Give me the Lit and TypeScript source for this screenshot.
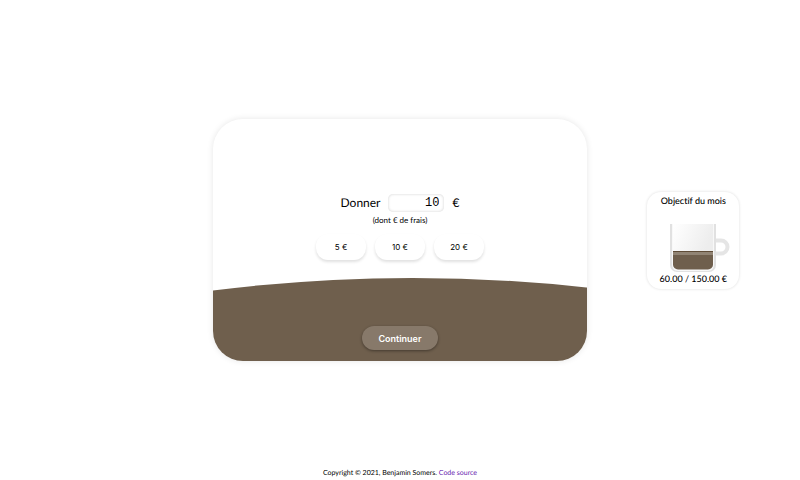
import { LitElement, html, css } from "lit";
import { customElement, property, state } from "lit/decorators.js";

@customElement("goal-mug")
class GoalMug extends LitElement {
  @property({ type: Number }) value = 0;
  @property({ type: Number }) goal = 1;

  static styles = css`
    :host {
      display: block;
    }
    .card {
      display: flex;
      flex-direction: column;
      align-items: center;
      box-sizing: border-box;
      min-width: 92px;
      padding: 3px 9px 4px;
      border-radius: 14px;
      background: #fff;
      box-shadow: 0 0 3px rgba(0, 0, 0, 0.14);
    }
    .title,
    .amount {
      margin: 0;
      font-size: 9px;
      line-height: 12px;
      font-weight: 500;
      font-variant-ligatures: none;
      white-space: nowrap;
    }
    .mug {
      display: block;
      width: 66px;
      height: 50px;
      margin: 16px 0 0;
      align-self: flex-end;
    }
  `;

  render() {
    const level = 44 - (this.value / this.goal) * 40;
    return html`
      <section class="card">
        <h2 class="title">Objectif du mois</h2>
        <svg class="mug" viewBox="-5 0 66 50" aria-hidden="true">
          <defs>
            <linearGradient id="glass" x1="0" y1="0" x2="1" y2="0.3">
              <stop offset="0" stop-color="#ffffff" />
              <stop offset="1" stop-color="#ededed" />
            </linearGradient>
          </defs>
          <path d="M46 17.500h6a6.500 6.500 0 0 1 0 13H46" fill="none" stroke="#e5e5e5" stroke-width="4" />
          <path d="M1 1h46v41a7 7 0 0 1-7 7H8a7 7 0 0 1-7-7z" fill="#e1e1e1" />
          <path d="M3 1h42v41a6 6 0 0 1-6 6H9a6 6 0 0 1-6-6z" fill="#f8f8f8" />
          <path d="M4 1h40v28H4z" fill="url(#glass)" />
          <path d="M4 ${level}h40V41.500a5 5 0 0 1-5 5H9a5 5 0 0 1-5-5z" fill="#6f5f4d" />
          <path d="M4 ${level}h40v4H4z" fill="#918474" />
          <path d="M4 ${level}h40v1H4z" fill="#5f4c37" />
        </svg>
        <p class="amount">${this.value.toFixed(2)} / ${this.goal.toFixed(2)} €</p>
      </section>
    `;
  }
}

@customElement("app-root")
class AppRoot extends LitElement {
  @state() private amount = 10;

  private presets = [5, 10, 20];

  static styles = css`
    :host {
      display: grid;
      grid-template-columns: 4fr 7fr 4fr;
      grid-template-rows: 1fr auto 1fr;
      min-height: 100vh;
      background: #fff;
      color: #000;
      font-family: Lato, sans-serif;
      text-rendering: geometricPrecision;
    }
    .donation {
      grid-column: 2;
      grid-row: 2;
      display: flex;
      flex-direction: column;
      overflow: hidden;
      border-radius: 30px;
      background: #fff;
      box-shadow: 0 0 6px rgba(0, 0, 0, 0.1);
    }
    .choice {
      display: flex;
      flex-direction: column;
      align-items: center;
      padding: 75px 16px 18px;
    }
    .line {
      display: flex;
      align-items: center;
      gap: 8px;
      font-size: 12px;
      line-height: 18px;
    }
    .amount {
      box-sizing: border-box;
      width: 56px;
      height: 18px;
      margin: 0;
      padding: 0 5px;
      border: 0;
      border-radius: 5px;
      background: #fff;
      box-shadow: inset 0 0 3px rgba(0, 0, 0, 0.18);
      color: #000;
      font: 12px "Liberation Mono", monospace;
      text-align: right;
    }
    .fees {
      margin: 2px 0 8px;
      font-size: 8px;
      line-height: 12px;
    }
    .presets {
      display: flex;
      gap: 9px;
    }
    .preset {
      width: 50px;
      height: 26px;
      padding: 0;
      border: 0;
      border-radius: 12px;
      background: #fff;
      box-shadow: 0 2px 3px rgba(0, 0, 0, 0.12);
      color: #000;
      font: 8px Inter, sans-serif;
    }
    .wave {
      display: block;
      width: 100%;
      height: 13px;
      overflow: visible;
    }
    .coffee {
      display: flex;
      justify-content: center;
      padding: 35px 16px 11px;
      background: #6f5f4d;
    }
    .submit {
      width: 76px;
      height: 24px;
      padding: 0;
      border: 0;
      border-radius: 12px;
      background: #87796a;
      box-shadow: 0 1px 3px rgba(0, 0, 0, 0.4);
      color: #fff;
      font: 600 9px Inter, sans-serif;
    }
    .goal {
      grid-column: 3;
      grid-row: 2;
      place-self: center;
    }
    .footer {
      grid-column: 1 / -1;
      grid-row: 3;
      align-self: end;
      padding-bottom: 1px;
      font-size: 7px;
      line-height: 12px;
      text-align: center;
    }
    .link {
      color: #6a1fb0;
      text-decoration: none;
    }
  `;

  render() {
    return html`
      <form class="donation" @submit=${(e: Event) => e.preventDefault()}>
        <div class="choice">
          <div class="line">
            <label for="amount">Donner</label>
            <input
              class="amount"
              id="amount"
              inputmode="numeric"
              .value=${String(this.amount)}
              @input=${(e: Event) => (this.amount = Number((e.target as HTMLInputElement).value) || 0)}
            />
            <span>€</span>
          </div>
          <p class="fees">(dont € de frais)</p>
          <div class="presets">
            ${this.presets.map(
              (p) => html`<button class="preset" type="button" @click=${() => (this.amount = p)}>${p} €</button>`
            )}
          </div>
        </div>
        <svg class="wave" viewBox="0 0 374 13" preserveAspectRatio="none" aria-hidden="true">
          <path d="M0 12.500Q187 -11 374 9.500L380 10.200V13H0z" fill="#6f5f4d" />
        </svg>
        <div class="coffee">
          <button class="submit" type="submit">Continuer</button>
        </div>
      </form>
      <goal-mug class="goal" .value=${60} .goal=${150}></goal-mug>
      <footer class="footer">
        Copyright © 2021, Benjamin Somers. <a class="link" href="#source">Code source</a>
      </footer>
    `;
  }
}
